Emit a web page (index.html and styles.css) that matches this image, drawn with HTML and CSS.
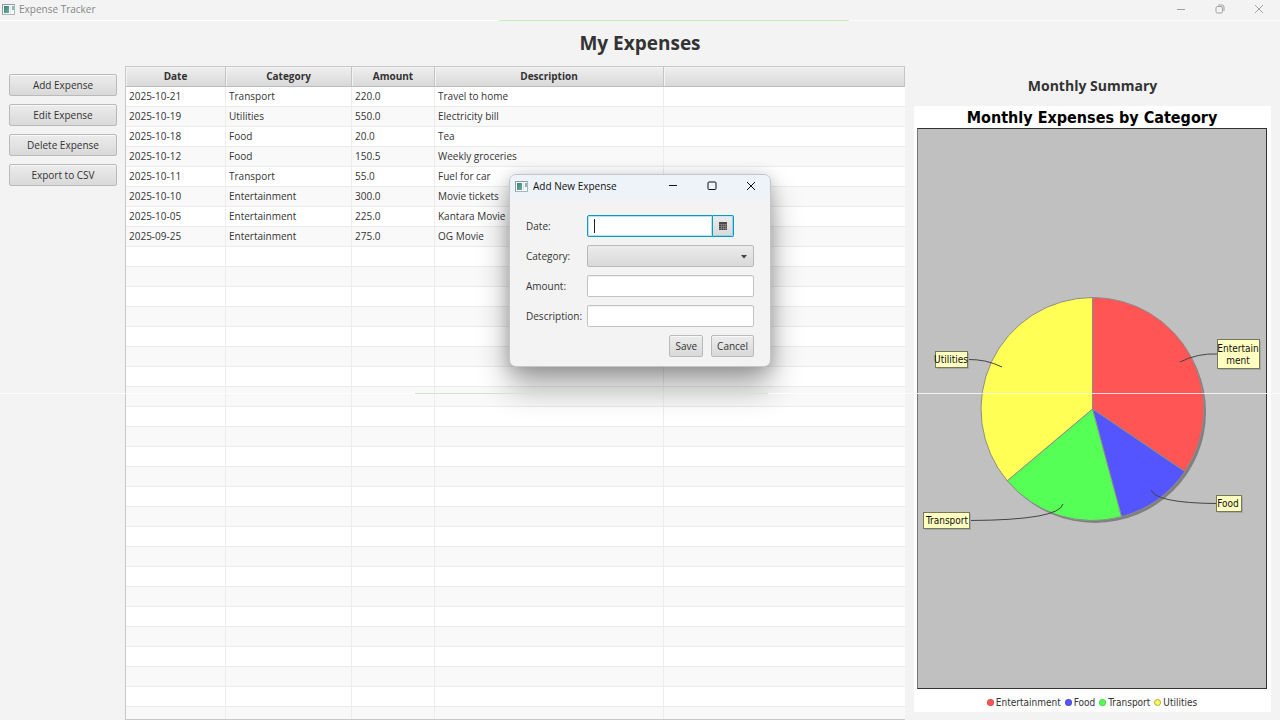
FILE: index.html
```html
<!DOCTYPE html>
<html lang="en">
<head>
<meta charset="utf-8">
<title>Expense Tracker</title>
<link rel="stylesheet" href="styles.css">
</head>
<body class="app">
<svg class="symbols" aria-hidden="true">
  <defs>
    <linearGradient id="teal" x1="0" y1="0" x2="1" y2="1"><stop offset="0" stop-color="#3a7f7c"/><stop offset="1" stop-color="#6fae9c"/></linearGradient>
    <symbol id="app-icon" viewBox="0 0 13 11">
      <rect x=".5" y=".5" width="12" height="10" fill="#f4f8f8" stroke="#a9b8bb"/>
      <path d="M.5 10.500V.5H12.500" fill="none" stroke="#8b9ca2"/>
      <rect x="2" y="2" width="5" height="7" fill="url(#teal)"/>
      <path d="M8.500 2v7" stroke="#dfe8e8"/>
      <path d="M11 2v4" stroke="#4d8b86" stroke-width="1.200"/>
    </symbol>
  </defs>
</svg>

<header class="titlebar">
  <svg class="app-icon" aria-hidden="true"><use href="#app-icon"/></svg>
  <span class="titlebar-text">Expense Tracker</span>
  <button class="win-btn" aria-label="Minimize"><svg width="10" height="10" viewBox="0 0 10 10"><path d="M1 5.500h8"/></svg></button>
  <button class="win-btn" aria-label="Restore"><svg width="10" height="10" viewBox="0 0 10 10"><rect x="1" y="2.500" width="6.500" height="6.500" rx="1.500"/><path d="M3 1h4q2 0 2 2v4"/></svg></button>
  <button class="win-btn" aria-label="Close"><svg width="10" height="10" viewBox="0 0 10 10"><path d="M1 1l8 8M9 1L1 9"/></svg></button>
</header>

<h1 class="page-title">My Expenses</h1>

<main class="workspace">
  <nav class="actions">
    <button class="btn">Add Expense</button>
    <button class="btn">Edit Expense</button>
    <button class="btn">Delete Expense</button>
    <button class="btn">Export to CSV</button>
  </nav>

  <section class="table-wrap">
    <table class="expenses">
      <colgroup><col class="col-date"><col class="col-category"><col class="col-amount"><col class="col-description"><col></colgroup>
      <thead>
        <tr><th>Date</th><th>Category</th><th>Amount</th><th>Description</th><th></th></tr>
      </thead>
      <tbody>
        <tr><td>2025-10-21</td><td>Transport</td><td>220.0</td><td>Travel to home</td><td></td></tr>
        <tr><td>2025-10-19</td><td>Utilities</td><td>550.0</td><td>Electricity bill</td><td></td></tr>
        <tr><td>2025-10-18</td><td>Food</td><td>20.0</td><td>Tea</td><td></td></tr>
        <tr><td>2025-10-12</td><td>Food</td><td>150.5</td><td>Weekly groceries</td><td></td></tr>
        <tr><td>2025-10-11</td><td>Transport</td><td>55.0</td><td>Fuel for car</td><td></td></tr>
        <tr><td>2025-10-10</td><td>Entertainment</td><td>300.0</td><td>Movie tickets</td><td></td></tr>
        <tr><td>2025-10-05</td><td>Entertainment</td><td>225.0</td><td>Kantara Movie</td><td></td></tr>
        <tr><td>2025-09-25</td><td>Entertainment</td><td>275.0</td><td>OG Movie</td><td></td></tr>
        <tr class="filler"><td></td><td></td><td></td><td></td><td></td></tr>
      </tbody>
    </table>
  </section>

  <aside class="summary">
    <h2 class="summary-title">Monthly Summary</h2>
    <figure class="chart">
      <figcaption class="chart-title">Monthly Expenses by Category</figcaption>
      <div class="plot">
        <svg class="pie" viewBox="0 0 348 559" role="img" aria-label="Expenses by category">
          <circle cx="177" cy="283" r="111" fill="#808080"/>
          <g stroke="#8c8c8c" stroke-width="1" stroke-linejoin="round">
            <path d="M174.500 280V168.500A111.500 111.500 0 0 1 266.800 342.500Z" fill="#ff5555"/>
            <path d="M174.500 280L266.800 342.500A111.500 111.500 0 0 1 203.500 387.700Z" fill="#5555ff"/>
            <path d="M174.500 280L203.500 387.700A111.500 111.500 0 0 1 89.200 351.800Z" fill="#55ff55"/>
            <path d="M174.500 280L89.200 351.800A111.500 111.500 0 0 1 174.500 168.500Z" fill="#ffff55"/>
          </g>
          <g class="leader">
            <path d="M49 230.500Q68 230 84 238"/>
            <path d="M299 225Q280 224 262 233"/>
            <path d="M298 374.500Q238 374 233 361"/>
            <path d="M52 391.500Q141 391 145 375"/>
          </g>
          <g class="tag-shadow">
            <rect x="19" y="224" width="32" height="16"/>
            <rect x="301" y="212" width="42" height="29"/>
            <rect x="300" y="368" width="25" height="16"/>
            <rect x="7" y="385" width="46" height="16"/>
          </g>
          <g class="tag">
            <rect x="17.500" y="222.500" width="32" height="16"/>
            <rect x="299.500" y="210.500" width="42" height="29"/>
            <rect x="298.500" y="366.500" width="25" height="16"/>
            <rect x="5.500" y="383.500" width="46" height="16"/>
          </g>
          <g class="tag-text">
            <text x="33" y="234">Utilities</text>
            <text x="320" y="223">Entertain</text>
            <text x="320" y="235">ment</text>
            <text x="310" y="378">Food</text>
            <text x="29" y="395">Transport</text>
          </g>
        </svg>
      </div>
      <ul class="legend">
        <li><span class="dot dot-red"></span>Entertainment</li>
        <li><span class="dot dot-blue"></span>Food</li>
        <li><span class="dot dot-green"></span>Transport</li>
        <li><span class="dot dot-yellow"></span>Utilities</li>
      </ul>
    </figure>
  </aside>
</main>

<section class="dialog" role="dialog" aria-labelledby="dialog-title">
  <header class="dialog-bar">
    <svg class="app-icon" aria-hidden="true"><use href="#app-icon"/></svg>
    <span class="dialog-title" id="dialog-title">Add New Expense</span>
    <button class="win-btn" aria-label="Minimize"><svg width="10" height="10" viewBox="0 0 10 10"><path d="M1 4.500h8"/></svg></button>
    <button class="win-btn" aria-label="Maximize"><svg width="10" height="10" viewBox="0 0 10 10"><rect x="1" y="1" width="8" height="7.500" rx="1"/></svg></button>
    <button class="win-btn" aria-label="Close"><svg width="10" height="10" viewBox="0 0 10 10"><path d="M1 1l8 8M9 1L1 9"/></svg></button>
  </header>
  <form class="form">
    <label for="date">Date:</label>
    <div class="date-picker">
      <input class="date-input" id="date" type="text">
      <span class="caret"></span>
      <button class="date-btn" type="button" aria-label="Open calendar">
        <svg width="8" height="8" viewBox="0 0 8 8"><path d="M0 0h8v8H0z" fill="#4a4a4a"/><path d="M0 2.500h8M0 4.500h8M0 6.500h8M2.500 2v6M4.500 2v6M6.500 2v6" stroke="#a8a8a8" stroke-width=".4"/></svg>
      </button>
    </div>
    <label for="category">Category:</label>
    <div class="select-wrap">
      <select class="select" id="category"><option></option><option>Food</option><option>Transport</option><option>Entertainment</option><option>Utilities</option></select>
      <svg class="select-arrow" width="6" height="4" viewBox="0 0 6 4" aria-hidden="true"><path d="M0 0h6L3 3.500z" fill="#444"/></svg>
    </div>
    <label for="amount">Amount:</label>
    <input class="field" id="amount" type="text">
    <label for="description">Description:</label>
    <input class="field" id="description" type="text">
    <div class="form-actions">
      <button class="btn" type="button">Save</button>
      <button class="btn" type="button">Cancel</button>
    </div>
  </form>
</section>

<div class="scan-line" aria-hidden="true"></div>
</body>
</html>
```

FILE: styles.css
```css
* { box-sizing: border-box; }

.app {
  margin: 0;
  height: 100vh;
  display: flex;
  flex-direction: column;
  position: relative;
  overflow: hidden;
  background: #f3f3f3;
  color: #333;
  font-family: "Open Sans", "Noto Sans", sans-serif;
  font-size: 10px;
  line-height: 14px;
}

button, input, select { font: inherit; color: inherit; }

.symbols { position: absolute; width: 0; height: 0; }

.titlebar {
  display: flex;
  align-items: center;
  flex: none;
  height: 21px;
  padding: 0 2px 2px 2px;
  color: #868686;
  border-bottom: 1px solid;
  border-image: linear-gradient(90deg, #fff 0 39%, #c4efbb 39% 66.300%, #fbfdfb 66.300%) 1;
}
.app-icon { width: 13px; height: 11px; flex: none; }
.titlebar-text { flex: 1; padding-left: 4px; }

.win-btn {
  display: grid;
  place-items: center;
  width: 39px;
  height: 20px;
  padding: 0;
  border: 0;
  background: none;
}
.win-btn svg { fill: none; stroke: currentColor; stroke-width: 1; }
.titlebar .win-btn { color: #a0a0a0; }

.page-title {
  margin: 0;
  height: 45px;
  line-height: 45px;
  flex: none;
  text-align: center;
  font-size: 19px;
  font-weight: bold;
}

.workspace {
  flex: 1;
  min-height: 0;
  display: grid;
  grid-template-columns: 108px minmax(0, 1fr) 357px;
  column-gap: 8px;
  padding: 0 9px;
}

.actions {
  display: flex;
  flex-direction: column;
  gap: 8px;
  padding-top: 8px;
}

.btn {
  height: 22px;
  padding: 0 5px 1px;
  border: 1px solid #bababa;
  border-radius: 2px;
  background: linear-gradient(#ececec, #d9d9d9);
  box-shadow: inset 0 1px 0 #f8f8f8;
}

.table-wrap {
  margin-right: 1px;
  border: 1px solid #c8c8c8;
  border-right: 0;
  min-height: 0;
  overflow: hidden;
}
.expenses {
  width: 100%;
  height: 100%;
  table-layout: fixed;
  border-collapse: separate;
  border-spacing: 0;
}
.col-date { width: 100px; }
.col-category { width: 126px; }
.col-amount { width: 83px; }
.col-description { width: 229px; }
.expenses th {
  height: 20px;
  padding: 0 0 1px;
  border-right: 1px solid #c4c4c4;
  border-bottom: 1px solid #bdbdbd;
  background: linear-gradient(#efefef, #d9d9d9);
  box-shadow: inset 1px 1px 0 #f4f4f4;
  font-weight: bold;
}
.expenses td {
  height: 20px;
  padding: 0 3px 2px;
  border-right: 1px solid #ededed;
  border-bottom: 1px solid #ebebeb;
  background: #fff;
  white-space: nowrap;
}
.expenses td:last-child { border-right: 0; }
.expenses tr:nth-child(even) td { background: #f9f9f9; }
.expenses .filler td {
  height: auto;
  border-bottom: 0;
  background: repeating-linear-gradient(#fff 0 19px, #ebebeb 19px 20px, #f9f9f9 20px 39px, #ebebeb 39px 40px);
}

.summary {
  display: flex;
  flex-direction: column;
  min-height: 0;
  padding-bottom: 8px;
}
.summary-title {
  margin: 0;
  height: 40px;
  line-height: 40px;
  text-align: center;
  font-size: 14px;
  font-weight: bold;
}
.chart {
  flex: 1;
  min-height: 0;
  display: flex;
  flex-direction: column;
  margin: 0;
  padding: 0 4px 0 3px;
  background: #fff;
  font-family: "DejaVu Sans Condensed", "DejaVu Sans", sans-serif;
}
.chart-title {
  height: 22px;
  line-height: 23px;
  text-align: center;
  color: #000;
  font-size: 16px;
  font-weight: bold;
  white-space: nowrap;
}
.plot {
  flex: 1;
  min-height: 0;
  border: 1px solid #333;
  border-left-color: #777;
  background: #c0c0c0;
}
.pie { display: block; width: 100%; height: 100%; }
.leader { fill: none; stroke: #444; stroke-width: 1; }
.tag-shadow { fill: #a8a8a8; }
.tag { fill: #ffffc0; stroke: #77775c; }
.tag-text { fill: #111; font-size: 10px; text-anchor: middle; }

.legend {
  display: flex;
  justify-content: center;
  align-items: center;
  gap: 4px;
  height: 23px;
  margin: 0;
  padding: 4px 0 0;
  list-style: none;
}
.legend li { display: flex; align-items: center; gap: 2px; }
.dot { width: 7px; height: 7px; border-radius: 50%; border: 1px solid #0002; }
.dot-red { background: #ff5555; }
.dot-blue { background: #5555ff; }
.dot-green { background: #55ff55; }
.dot-yellow { background: #ffff55; border-color: #a8a840; }

.scan-line {
  position: absolute;
  left: 0;
  right: 0;
  top: 393px;
  height: 1px;
  background: linear-gradient(90deg, #fffc 0 32.400%, #d0e6cb 32.400% 60%, #fffc 60%);
}

.dialog {
  position: absolute;
  top: 174px;
  left: 50%;
  width: 262px;
  transform: translateX(-50%);
  border: 1px solid #c3c6c9;
  border-radius: 7px;
  background: #f3f3f3;
  box-shadow: 0 20px 32px #0005, 0 2px 16px #0003;
}
.dialog-bar {
  display: flex;
  align-items: center;
  height: 24px;
  padding: 0 0 2px 5px;
  border-radius: 6px 6px 0 0;
  background: #edf3f8;
  color: #111;
}
.dialog-title { flex: 1; padding-left: 5px; white-space: nowrap; }

.form {
  display: grid;
  grid-template-columns: 53px minmax(0, 1fr);
  column-gap: 8px;
  row-gap: 8px;
  align-items: center;
  padding: 16px 16px 9px;
}
.form label { white-space: nowrap; }
.field, .date-input {
  width: 100%;
  height: 22px;
  padding: 0 6px;
  border: 1px solid #c3c3c3;
  border-radius: 2px;
  background: #fff;
  box-shadow: inset 0 1px 1px #0001;
  outline: none;
}
.date-picker {
  position: relative;
  display: flex;
  width: 147px;
  height: 22px;
}
.date-input {
  flex: 1;
  min-width: 0;
  border-color: #0f98c4;
  border-radius: 2px 0 0 2px;
  box-shadow: inset 0 0 0 1px #b5e4f3;
}
.caret {
  position: absolute;
  left: 7px;
  top: 4px;
  width: 1px;
  height: 14px;
  background: #222;
}
.date-btn {
  display: grid;
  place-items: center;
  width: 21px;
  padding: 0;
  border: 1px solid #0f98c4;
  border-left: 0;
  border-radius: 0 2px 2px 0;
  background: linear-gradient(#ececec, #d9d9d9);
  box-shadow: inset -1px 0 0 #8fd3ea, inset 0 1px 0 #c7e9f4, inset 0 -1px 0 #8fd3ea;
}
.select-wrap { position: relative; height: 22px; }
.select {
  appearance: none;
  display: block;
  width: 100%;
  height: 22px;
  padding: 0 18px 0 6px;
  border: 1px solid #bababa;
  border-radius: 2px;
  background: linear-gradient(#ececec, #d9d9d9);
}
.select-arrow { position: absolute; right: 7px; top: 10px; pointer-events: none; }
.form-actions {
  grid-column: 1 / -1;
  display: flex;
  justify-content: flex-end;
  gap: 8px;
}
```
